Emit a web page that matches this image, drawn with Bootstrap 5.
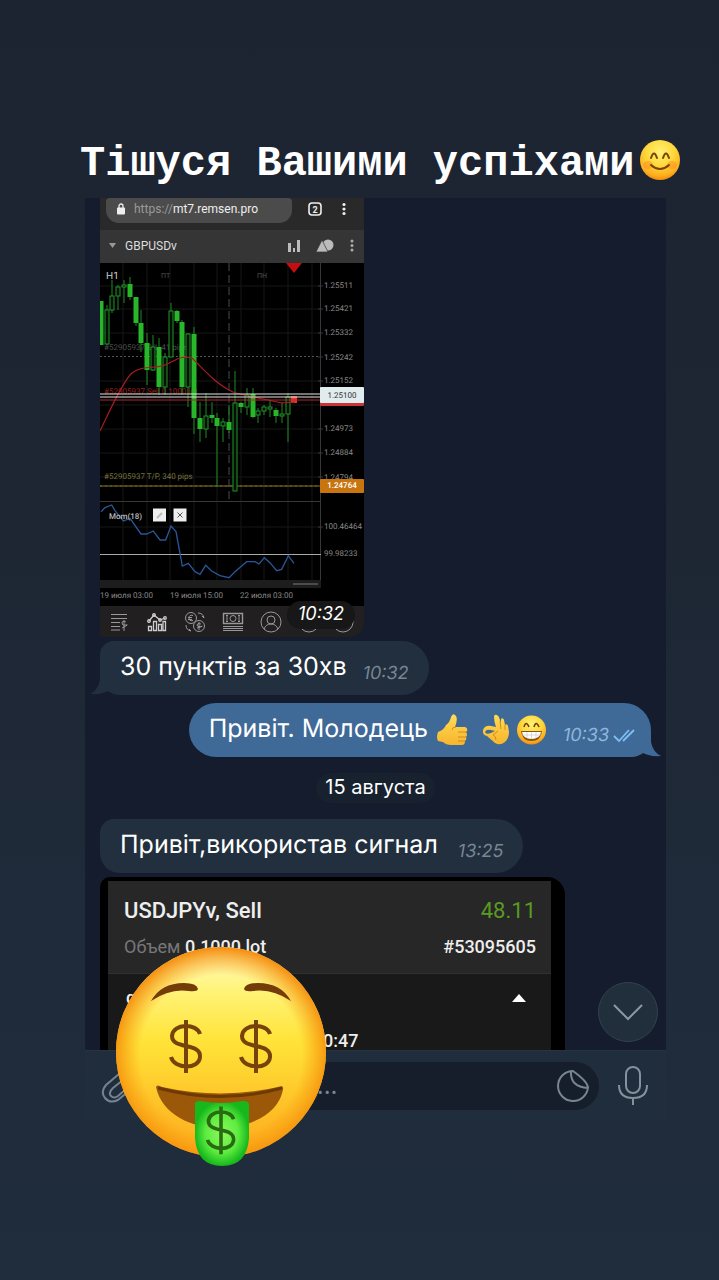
<!DOCTYPE html>
<html lang="uk">
<head>
<meta charset="utf-8">
<meta name="viewport" content="width=device-width, initial-scale=1">
<title>Тішуся Вашими успіхами</title>
<link href="https://cdn.jsdelivr.net/npm/bootstrap@5.3.0/dist/css/bootstrap.min.css" rel="stylesheet">
<style>
body{font-family:Inter,"Liberation Sans",sans-serif;color:#fff;background:#1f2937}
.story{min-height:100vh;background:linear-gradient(#1d2431 0,#1e2633 40%,#1f2b3b 75%,#202d3d 100%);padding:138px 53px 60px 85px;overflow:hidden}
.caption{font:bold 42px/52px "Liberation Mono",monospace;margin:0 -30px 8px -5px;white-space:nowrap}
.caption svg{width:42px;height:42px;flex:none;margin:-8px 0 0 4px}
.chat{background:#141c2d;height:852px;padding:0 15px;overflow:hidden}
.photo{width:264px;height:439px;border-radius:0 0 14px 2px;overflow:hidden;background:#211f20;font-family:Roboto,sans-serif}
.addr{height:32px;background:#292929;padding:0 18px 2px 6px}
.urlbox{width:186px;height:25px;padding:0 10px 4px;border-radius:4px 4px 13px 13px;background:#4b4b4c;font-size:12px;line-height:20px;color:#eee}
.urlbox i{font-style:normal;color:#999}
.symbar{height:33px;background:#353535;padding:0 10px 2px 8px;font-size:12px;line-height:30px;color:#ddd}
.plain{background:none;border:0;padding:0;line-height:0;color:inherit}
.chart{width:264px;height:343px;display:block;background:#000;text-rendering:geometricPrecision}
.tools{display:grid;grid-template-columns:repeat(6,38px) 30px;height:31px;align-items:center;justify-items:center;color:#999}
.pic-time{right:9px;bottom:8px;width:68px;height:28px;border-radius:14px;background:#171717;font:italic 18px/26px Inter,sans-serif;text-align:center}
.msg{height:54px;padding:0 20px;white-space:nowrap;font-size:25px;line-height:52px;text-rendering:geometricPrecision}
.msg time{font-size:18px;font-style:italic;line-height:24px;padding-bottom:9px}
.msg-in{background:#222f3e;border-radius:14px 27px 27px 20px}
.msg-in time{color:#788592}
.msg-out{background:#3f6997;border-radius:27px 27px 20px 27px}
.msg-out time{color:#8fb6dc}
.tail{bottom:0}
.day{height:30px;border-radius:15px;background:#18222f;font-size:20px;line-height:29px;padding:0 9px}
.trade{width:465px;height:174px;background:#000;border-radius:10px 18px 0 0;padding:4px 14px 0 8px;font:500 18px/24px Roboto,sans-serif;color:#eee}
.trade-top{height:93px;background:#272727;padding:16px 15px 0 16px;border-bottom:1px solid #303030}
.trade-name{font-size:22px;line-height:28px;margin-bottom:10px}
.trade-rest{background:#191919;height:77px;padding:12px 25px 0 18px}
.trade-stamp{padding:22px 0 0 197px;line-height:18px}
.gain{color:#5b9a22;font-weight:400}
.dim{color:#777;font-weight:400}
.down{right:8px;bottom:8px;width:60px;height:60px;border:1px solid #33414f;border-radius:50%;background:#212f3d}
.composer{height:70px;background:#202d3c;border-top:1px solid #263442;padding:0 18px 0 16px}
.field{height:48px;border-radius:24px;background:#151e2a;width:460px;padding:0 25px 0 39px}
.field input{background:none;border:0;color:#fff;font-size:24px;line-height:30px;min-width:0}
.field input::placeholder{color:#788592;opacity:1}
.sticker{left:28px;bottom:-48px;width:216px;height:226px}
</style>
</head>
<body>
<svg width="0" height="0" class="position-absolute" aria-hidden="true"><defs>
<radialGradient id="face" cx=".5" cy=".3" r=".7"><stop offset="0" stop-color="#fff176"/><stop offset=".5" stop-color="#ffd83a"/><stop offset=".85" stop-color="#fdae1e"/><stop offset="1" stop-color="#f08c0c"/></radialGradient>
<linearGradient id="hand" x2="0" y2="1"><stop offset="0" stop-color="#ffdc55"/><stop offset="1" stop-color="#f7b52c"/></linearGradient>
</defs></svg>
<main class="story">
  <h1 class="caption d-flex align-items-center"><span>Тішуся Вашими успіхами</span><svg viewBox="0 0 42 42" role="img" aria-label="усмішка"><circle cx="21" cy="21" r="20" fill="url(#face)"/><ellipse cx="9" cy="26" rx="5" ry="4" fill="#ff8a1f" opacity=".5"/><ellipse cx="33" cy="26" rx="5" ry="4" fill="#ff8a1f" opacity=".5"/><path d="M12 19q3-9 6 0M24 19q3-9 6 0M12 26q9 8 18 0" fill="none" stroke="#7a4504" stroke-width="2" stroke-linecap="round"/></svg></h1>

  <section class="position-relative">
  <div class="chat position-relative">
    <div class="photo position-relative mb-1">
      <div class="addr d-flex">
        <div class="urlbox d-flex align-items-center"><svg width="10" height="12" viewBox="0 0 10 12" class="me-2"><rect x="1" y="4.500" width="8" height="7" rx="1" fill="#eee"/><path d="M3 5V3a2 2 0 0 1 4 0v2" fill="none" stroke="#eee" stroke-width="1.300"/></svg><span><i>https://</i>mt7.remsen.pro</span></div>
        <button class="plain ms-auto pb-2" style="margin-right:20px" aria-label="Вкладки"><svg width="14" height="14" viewBox="0 0 14 14"><rect x="1" y="1" width="12" height="12" rx="3" fill="none" stroke="#eee" stroke-width="1.600"/><text x="7" y="10.500" font-size="9" font-weight="700" text-anchor="middle" fill="#eee">2</text></svg></button>
        <button class="plain pb-2" aria-label="Меню"><svg width="4" height="14" fill="#eee"><circle cx="2" cy="2.500" r="1.600"/><circle cx="2" cy="7" r="1.600"/><circle cx="2" cy="11.500" r="1.600"/></svg></button>
      </div>
      <div class="symbar d-flex align-items-center">
        <svg width="9" height="7" class="me-2"><path d="M1 1h7L4.500 6z" fill="#999"/></svg><span>GBPUSDv</span>
        <span class="ms-auto d-flex align-items-center gap-3">
        <button class="plain" aria-label="Індикатори"><svg width="12" height="12" fill="#bbb"><path d="M0 3h3v9H0zM5 8h2v4H5zM9 0h3v12H9z"/></svg></button>
        <button class="plain" aria-label="Фігури"><svg width="18" height="13" fill="#bbb"><circle cx="12" cy="6" r="5.500"/><path d="M6 1l6 12H0z" stroke="#353535" stroke-width=".7"/></svg></button>
        <button class="plain" aria-label="Ще"><svg width="4" height="13" fill="#aaa"><circle cx="2" cy="2" r="1.500"/><circle cx="2" cy="6.500" r="1.500"/><circle cx="2" cy="11" r="1.500"/></svg></button></span>
      </div>
      <svg class="chart" viewBox="100 263 264 343" font-family="Roboto, sans-serif" font-size="8" fill="#888">
        <path d="M123 263v322M147 263v322M170 263v322M194 263v322M217 263v322M241 263v322M264 263v322M288 263v322M312 263v322M100 286h220M100 309h220M100 333h220M100 381h220M100 405h220M100 429h220M100 453h220M100 477h220M100 527h220" stroke="#171717"/>
        <path d="M320.500 263v322M318 286h5M318 309h5M318 333h5M318 357h5M318 381h5M318 429h5M318 453h5M318 477h5M318 527h5M100 501.500h221" stroke="#383838" fill="none"/>
        <path d="M100 356.500h220" stroke="#555" stroke-dasharray="2 2"/><path d="M229 263v236" stroke="#4a4a4a" stroke-dasharray="8 4"/>
        <text x="106" y="279" font-size="10" fill="#ccc">H1</text><text x="161" y="278" font-size="7" fill="#555">ПТ</text><text x="257" y="278" font-size="7" fill="#555">ПН</text>
        <text x="104" y="350" font-size="8" fill="#4c4c4c">#52905937 S/L 41 pips</text>
        <text x="104" y="394" font-size="8" fill="#96201e">#52905937 Sell 0.1000 lot</text>
        <text x="104" y="479" font-size="8" fill="#76713a">#52905937 T/P, 340 pips</text>
        <path d="M100 486h221" stroke="#9b6c20"/><path d="M100 486h221" stroke="#4a7433" stroke-dasharray="2 3"/>
        <g id="candles"></g>
        <path d="M100 431C108 415 122 382 132 373C142 365 155 369 165 365S180 355 192 358C203 369 217 385 233 392C245 396 265 399 282 403L295 402" fill="none" stroke="#a81d22" stroke-width="1.200"/>
        <path d="M100 400h221" stroke="#b3262c"/><path d="M100 394h221M100 397h221" stroke="#e5e5e5"/>
        <path d="M286 263h16l-8 10z" fill="#c30f12"/>
        <g><text x="324" y="288">1.25511</text><text x="324" y="311">1.25421</text><text x="324" y="335">1.25332</text><text x="324" y="360">1.25242</text><text x="324" y="383">1.25152</text><text x="324" y="431">1.24973</text><text x="324" y="455">1.24884</text><text x="324" y="480">1.24794</text><text x="324" y="529">100.46464</text><text x="324" y="556">99.98233</text></g>
        <rect x="320" y="390" width="44" height="16" rx="1" fill="#c93436"/><rect x="320" y="387" width="44" height="16" rx="1" fill="#e1ecef"/><text x="342" y="398" text-anchor="middle" fill="#333">1.25100</text>
        <rect x="320" y="479" width="44" height="14" rx="1" fill="#c87510"/><text x="342" y="488" text-anchor="middle" font-weight="500" fill="#fff">1.24764</text>
        <path d="M100 554.500h221" stroke="#aaa"/>
        <path transform="translate(95 490) scale(.333333)" d="M18 65L30 53 50 45 60 62 85 93 105 85 138 132 155 132 175 123 195 150 212 150 228 108 243 125 262 228 280 220 300 245 315 253 332 226 350 243 375 257 402 263 420 245 455 215 480 215 492 222 508 203 525 218 545 242 560 238 580 197 597 220" fill="none" stroke="#2a5598" stroke-width="4"/>
        <text x="109" y="519" font-weight="500" fill="#bbb">Mom(18)</text>
        <path d="M153 508.500h13v13h-13zM173.500 508.500h13v13h-13z" fill="#eee"/><path d="M157 518l5-5" stroke="#bbb" stroke-width="2"/><path d="M177.500 512.500l5 5m0-5l-5 5" stroke="#555"/>
        <path d="M100 580h221v8H100z" fill="#1d1d1d"/><path d="M293 584h25" stroke="#4b4b4b" stroke-width="2"/>
        <text x="100" y="598">19 июля 03:00</text><text x="170" y="598">19 июля 15:00</text><text x="240" y="598">22 июля 03:00</text>
      </svg>
      <div class="tools">
        <button class="plain" aria-label="Котирування"><svg width="20" height="20" fill="none" stroke="currentColor"><path d="M2 2.500h16M2 6.500h16M2 10.500h9M2 14.500h9M2 18h9"/><path d="M17 10q-4-2-4 1t4 2-4 3M15 8v11"/></svg></button>
        <button class="plain" aria-label="Графіки"><svg width="20" height="20" fill="none" stroke="#ccc" stroke-width="1.300"><path d="M1.500 14.500h3v4h-3zM6.500 9.500h3v9h-3zM11.500 12.500h3v6h-3zM16 9.500h2.500v9H16zM2 9l5-6 6 5 5-2"/><circle cx="2" cy="9" r="1.300"/><circle cx="7" cy="3" r="1.300"/><circle cx="13" cy="8" r="1.300"/><circle cx="18" cy="6" r="1.300"/></svg></button>
        <button class="plain" aria-label="Обмін"><svg width="22" height="22" fill="none" stroke="currentColor"><circle cx="7" cy="7" r="5.500"/><circle cx="15" cy="15" r="5.500"/><path d="M9 4.500q-4-1-4 2.500t4 2.500M4 6.500h4M4 8.500h4M17 13q-4-1.500-4 1t4 1.500-4 1.500M15 11v8M14 2q5 0 6 5m0 0l-2-2M2 14q0 5 5 6m0 0l-2-2"/></svg></button>
        <button class="plain" aria-label="Торгівля"><svg width="22" height="21" fill="none" stroke="currentColor"><path d="M1.500 2.500h19v10h-19z" stroke-width="1.400"/><circle cx="11" cy="7.500" r="3"/><path d="M5 5v5M17 5v5M1 15.500h20M1 17.500h20M1 19.500h20M4 4.500h2M16 4.500h2M4 10.500h2M16 10.500h2"/></svg></button>
        <button class="plain" aria-label="Профіль"><svg width="22" height="22" fill="none" stroke="currentColor"><circle cx="11" cy="11" r="10"/><circle cx="11" cy="9" r="4"/><path d="M4 18q2-5 7-5t7 5"/></svg></button>
        <button class="plain" aria-label="Показники"><svg width="22" height="22" fill="none" stroke="currentColor"><circle cx="11" cy="11" r="10"/><path d="M7 14h8v3H7zM11 13l3-5"/></svg></button>
        <button class="plain" aria-label="Ордери"><svg width="22" height="22" fill="none" stroke="currentColor"><circle cx="11" cy="11" r="10"/><path d="M8 16V6l-2 3M8 6l2 3M14 6v10l-2-3m2 3l2-3"/></svg></button>
      </div>
      <time class="pic-time position-absolute">10:32</time>
    </div>

    <div class="d-flex mb-2"><div class="msg msg-in position-relative d-flex"><svg class="tail position-absolute start-0" style="margin-left:-10px" width="34" height="22"><path d="M10 0v7Q8 17 0 21Q12 22 20 17L30 22V0z" fill="#222f3e"/></svg><span class="position-relative">30 пунктів за 30хв</span><time class="align-self-end ps-3 position-relative">10:32</time></div></div>
    <div class="d-flex justify-content-end mb-3"><div class="msg msg-out position-relative d-flex pe-3"><svg class="tail position-absolute end-0" style="margin-right:-10px" width="34" height="22"><path d="M24 0v7Q26 17 34 21Q22 22 14 17L4 22V0z" fill="#3f6997"/></svg><span>Привіт. Молодець</span>
      <span class="d-flex align-items-center ps-2 position-relative" role="img" aria-label="клас, чудово, радість">
      <svg width="34" height="34" viewBox="0 0 34 34"><path d="M15 4q2-5 5-1 2 3-1 11h10q3 1 2 4l-1 1q2 3 0 5 1 3-1 4 0 4-3 4H15q-5 0-8-3l-5-1q-2-4 0-9 6-2 8-7 4-3 5-8z" fill="url(#hand)"/><path d="M30 19h-8M30 24h-8M29 28h-7M20 14q-4 0-4 3" stroke="#d58a1c" fill="none"/></svg>
      <svg width="28" height="34" viewBox="0 0 28 34" style="margin-left:12px"><path fill-rule="evenodd" d="M12 4q0-3 3-2 2 1 3 5l1 4V6q2-2 3 1l1 5q2-2 3 1l1 6q0 6-4 10-5 4-10 1l-8-7q-5-1-4-6 2-5 8-4l5 1q-2-6-2-10zM9 17q-5-1-6 2 1 3 6 1l4-2z" fill="url(#hand)"/><path d="M18 8l1 8M23 12v5M16 18l-5 4q3 1 3 5" fill="none" stroke="#d58a1c"/></svg>
      <svg width="31" height="34" viewBox="0 0 31 34" style="margin-left:6px"><circle cx="15.500" cy="17" r="14.500" fill="url(#face)"/><path d="M8 14q2-7 5 0M18 14q2-7 5 0" fill="none" stroke="#6b3e08" stroke-width="1.500"/><path d="M5 18h21q-1 10-10.500 10T5 18z" fill="#8c5411"/><path d="M6 19h19q-1 7-9.500 7T6 19z" fill="#fff"/><path d="M6 22h19M11 19v6M15.500 19v7M20 19v6" stroke="#ccc" stroke-width=".7"/></svg></span>
      <time class="align-self-end ps-3 position-relative">10:33</time><svg class="align-self-end position-relative ms-1" style="margin-bottom:14px" width="22" height="14" fill="none" stroke="#7dc0f4" stroke-width="1.800"><path d="M1 7l5 5L16 1M10 12L21 1"/></svg></div></div>
    <div class="d-flex justify-content-center mb-3"><div class="day">15 августа</div></div>
    <div class="d-flex mb-1"><div class="msg msg-in d-flex"><span>Привіт,використав сигнал</span><time class="align-self-end ps-3 ms-1">13:25</time></div></div>

    <div class="trade">
      <div class="trade-top">
        <div class="d-flex justify-content-between trade-name"><span>USDJPYv, Sell</span><span class="gain">48.11</span></div>
        <div class="d-flex justify-content-between"><span><span class="dim">Объем</span> 0.1000 lot</span><span>#53095605</span></div>
      </div>
      <div class="trade-rest">
        <div class="d-flex justify-content-between align-items-center"><span>q</span><svg width="14" height="8"><path d="M0 8L7 0l7 8z" fill="#fff"/></svg></div>
        <div class="trade-stamp">0:47</div>
      </div>
    </div>
    <button class="down position-absolute plain" aria-label="Униз"><svg width="32" height="20" fill="none" stroke="#8b98a5" stroke-width="2"><path d="M2 3l14 14L30 3"/></svg></button>
  </div>

  <form class="composer d-flex align-items-center">
    <button type="button" class="plain" aria-label="Прикріпити"><svg width="38" height="38" fill="none" stroke="#748391" stroke-width="2"><path d="M24 2L5 18q-6 7-1 13t13 2L34 19M27 9L12 21q-5 5-2 8t7 0l15-13"/></svg></button>
    <label class="field d-flex align-items-center"><input class="flex-grow-1 shadow-none" style="outline:0" type="text" placeholder="Сообщение..." aria-label="Сообщение">
      <svg style="margin-right:-15px" width="32" height="32" fill="none" stroke="#788592" stroke-width="2"><path d="M16 1A15 15 0 1 0 31 17Q30 11 16 1zM14 1Q13 17 31 18"/></svg></label>
    <button type="button" class="plain ms-auto" aria-label="Голосове повідомлення"><svg width="30" height="40" fill="none" stroke="#84919e" stroke-width="2"><rect x="8" y="1" width="14" height="26" rx="7"/><path d="M1 19q0 13 14 13t14-13M15 32v7"/></svg></button>
  </form>

  <svg class="sticker position-absolute" viewBox="113 942 216 226" role="img" aria-label="грошове обличчя">
    <defs>
      <linearGradient id="coin" x2="0" y2="1"><stop offset="0" stop-color="#fffbd0"/><stop offset=".2" stop-color="#fff47a"/><stop offset=".45" stop-color="#ffe338"/><stop offset="1" stop-color="#fda81b"/></linearGradient>
      <radialGradient id="rim" cx=".5" cy=".52" r=".52"><stop offset=".74" stop-color="#f79a0c" stop-opacity="0"/><stop offset="1" stop-color="#f58c0b"/></radialGradient>
      <radialGradient id="tongue"><stop offset="0" stop-color="#8cf75e"/><stop offset=".6" stop-color="#5eec40"/><stop offset="1" stop-color="#16b81c"/></radialGradient>
      <g id="dollar"><path d="M14 -12C11 -23 -13 -23 -14 -10C-14 4 15 -4 14 11C13 24 -12 23 -15 11M0 -26v53" fill="none" stroke-width="4"/></g>
    </defs>
    <circle cx="221" cy="1052" r="105" fill="url(#coin)"/><circle cx="221" cy="1052" r="105" fill="url(#rim)"/>
    <path d="M151 1001q10-18 33-18 13 0 14 6-1 3-9 2-19-3-38 10zM291 1001q-10-18-33-18-13 0-14 6 1 3 9 2 19-3 38 10z" fill="#743c08"/>
    <g stroke="#77430b"><use href="#dollar" x="186" y="1046"/><use href="#dollar" x="256" y="1046"/></g>
    <path d="M156 1087q1-3 6 0 59 13 116 0 6-2 5 2c-8 50-115 54-127-2z" fill="#9b5809"/><path d="M158 1088q63 17 124 0" fill="none" stroke="#6d3904" stroke-width="3"/>
    <path d="M195 1105q-1-4 5-4 21 4 43 0 6 0 6 4v33q-2 28-27 28t-27-28z" fill="url(#tongue)"/>
    <g stroke="#286b10" transform="translate(221 1130) scale(.9)"><use href="#dollar"/></g>
  </svg>
  </section>
</main>
<script>
// x, high, low, body top, body bottom, filled
const rows=[[101,301,345,301,345,1],[107,305,345,310,344,0],[112,280,313,296,310,0],[118,285,310,287,296,0],[124,280,303,285,287,0],[130,277,300,284,297,1],[136,297,326,297,323,1],[141,310,352,323,343,1],[147,333,385,343,370,1],[153,335,371,347,370,0],[159,338,395,347,387,1],[165,353,395,357,387,0],[171,303,357,311,357,0],[177,310,323,311,321,1],[182,320,395,322,387,1],[188,333,407,334,387,0],[194,327,434,334,418,1],[200,402,442,418,429,1],[206,393,438,416,429,0],[212,402,423,415,418,1],[217,413,487,418,426,1],[223,418,442,422,426,0],[229,405,433,422,430,1],[235,371,491,403,491,0],[241,402,413,403,407,1],[247,388,415,395,407,0],[253,388,418,394,417,1],[258,408,423,411,415,0],[264,405,415,407,411,0],[270,400,417,407,409,0],[276,408,423,410,416,1],[282,402,423,414,416,0],[288,393,442,397,414,0]];
document.getElementById('candles').innerHTML=rows.map(([x,h,l,t,b,f])=>`<path d="M${x} ${h}V${l}" stroke="#1f8a22"/><rect x="${x-(f?2.5:2)}" y="${t}" width="${f?5:4}" height="${b-t}" fill="${f?'#28b62b':'#041004'}" stroke="${f?'none':'#23942a'}"/>`).join('')+'<rect x="291" y="396" width="6" height="7" fill="#f0362c"/>';
</script>
<script src="https://cdn.jsdelivr.net/npm/bootstrap@5.3.0/dist/js/bootstrap.bundle.min.js"></script>
</body>
</html>
